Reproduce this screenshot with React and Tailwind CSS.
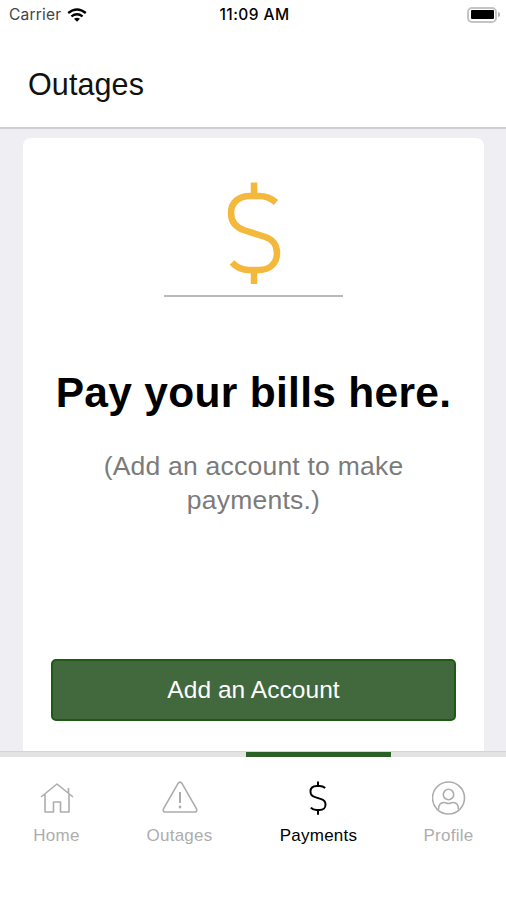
import React from "react";

const DollarIcon = ({ className, strokeWidth }) => (
  <svg viewBox="0 0 54 104" className={className} fill="none" stroke="currentColor" strokeWidth={strokeWidth}>
    <path d="M49 21.5C44 17 38 15 32 15H23C11 15 4 22 4 32C4 42 10 47 18 49.5L37 55.5C45 58 50 63 50 72C50 82 43 89 32 89H22C15 89 10 87 5 81.5" />
    <path d="M27 1.5V15M27 89V103" />
  </svg>
);

const HomeIcon = () => (
  <svg viewBox="0 0 34 34" className="w-[34px] h-[34px]" fill="none" stroke="currentColor" strokeWidth="1.6" strokeLinejoin="round">
    <path d="M1 16L17 3L33 16M28.5 12V7M5 13V31H13.5V21H20.5V31H29V13" />
  </svg>
);

const WarningIcon = () => (
  <svg viewBox="0 0 36 34" className="w-9 h-[34px]" fill="none" stroke="currentColor" strokeWidth="1.6" strokeLinejoin="round">
    <path d="M16.2 2.2Q18 0 19.8 2.2L34.4 27.6Q35.8 30.8 32.6 31H3.4Q0.2 30.8 1.6 27.6Z" />
    <path d="M18 11V22" strokeWidth="2" />
    <circle cx="18" cy="26" r="1.4" fill="currentColor" stroke="none" />
  </svg>
);

const ProfileIcon = () => (
  <svg viewBox="0 0 34 34" className="w-[34px] h-[34px]" fill="none" stroke="currentColor" strokeWidth="1.6">
    <circle cx="16.5" cy="17" r="16" />
    <circle cx="16.5" cy="13.5" r="5.2" />
    <path d="M6.5 28.5C6.5 23.5 9 21.5 12 21.5C14 21.5 14.5 22.5 16.5 22.5C18.5 22.5 19 21.5 21 21.5C24 21.5 26.5 23.5 26.5 28.5" />
  </svg>
);

const WifiIcon = () => (
  <svg viewBox="0 0 20 14" className="w-5 h-3.5" fill="none" stroke="currentColor" strokeWidth="2.3">
    <path d="M1.2 5Q10 -2 18.8 5M4.4 8.4Q10 4 15.6 8.4" />
    <path d="M7 10.8Q10 8.6 13 10.8L10 13.8Z" fill="currentColor" stroke="none" />
  </svg>
);

const StatusBar = () => (
  <div className="grid grid-cols-3 items-center h-[29px] pl-[9px] pr-[6px] font-[Inter,sans-serif] text-black">
    <div className="flex items-center gap-[6px] text-[15.5px] tracking-[0.2px] text-[#444]">
      <span>Carrier</span>
      <span className="text-black"><WifiIcon /></span>
    </div>
    <span className="text-center text-[15.5px] font-medium tracking-[0.45px] whitespace-nowrap">11:09 AM</span>
    <div className="flex items-center justify-end gap-px">
      <div className="w-[30px] h-4 rounded-[5px] border-2 border-[#c4c4c4] p-[1.5px]">
        <div className="h-full rounded-[1px] bg-black"></div>
      </div>
      <div className="w-[2px] h-[5px] rounded-r-full bg-[#b5b5b5]"></div>
    </div>
  </div>
);

const tabs = [
  { name: "Home", icon: <HomeIcon />, width: "w-[113px]" },
  { name: "Outages", icon: <WarningIcon />, width: "w-[133px]" },
  { name: "Payments", icon: <DollarIcon className="w-[18px] h-[34px]" strokeWidth="6" />, width: "w-[145px]", active: true },
  { name: "Profile", icon: <ProfileIcon />, width: "w-[115px]" },
];

const TabBar = () => (
  <nav className="flex h-[149px] bg-white">
    {tabs.map((tab) => (
      <div key={tab.name} className={`flex flex-col items-center ${tab.width} ${tab.active ? "text-black" : "text-[#adadad]"}`}>
        <div className={`w-full h-[6px] border-t ${tab.active ? "border-[#d5d5d7] bg-[#2b6126]" : "border-[#d5d5d7] bg-[#e3e3e4]"}`}></div>
        <div className={`mt-[24px] h-[34px] ${tab.active ? "pr-px" : ""}`}>{tab.icon}</div>
        <span className="mt-[9px] text-[17px] leading-6 tracking-[0.25px]">{tab.name}</span>
      </div>
    ))}
  </nav>
);

const App = () => {
  return (
    <div className="flex flex-col w-[506px] h-[900px] overflow-hidden bg-white font-['Liberation_Sans',Arial,sans-serif]">
      <StatusBar />

      <header className="flex items-center h-[100px] pl-7 pt-[14px] border-b-2 border-[#cfcfd1] shrink-0">
        <h1 className="text-[30.5px] tracking-[0.1px] text-[#111]">Outages</h1>
      </header>

      <main className="flex-1 bg-[#eeeef3] pl-[23px] pr-[22px] pt-[9px]">
        <div className="flex flex-col items-center h-full bg-white rounded-t-lg px-7">
          <DollarIcon className="mt-[43px] w-[54px] h-[104px] text-[#f3b83c]" strokeWidth="6.5" />
          <div className="mt-[10px] w-[179px] h-[2px] bg-[#b9b9bb]"></div>

          <h2 className="mt-[70px] text-[42.5px] leading-[52px] font-bold tracking-[0.3px] text-black whitespace-nowrap">
            Pay your bills here.
          </h2>
          <p className="mt-[30px] w-[340px] text-center text-[26.5px] leading-[34px] tracking-[0.22px] text-[#7b7b7b]">
            (Add an account to make payments.)
          </p>

          <button className="mt-[142px] w-[405px] h-[62px] rounded-[5px] border-2 border-[#1c5a16] bg-[#41693d] text-white text-[24.5px] tracking-[0.05px]">
            Add an Account
          </button>
        </div>
      </main>

      <TabBar />
    </div>
  );
};

export default App;
